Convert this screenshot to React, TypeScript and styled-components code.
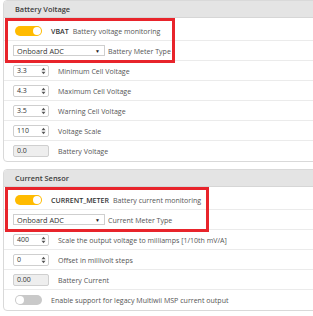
import React from "react";
import styled, { createGlobalStyle } from "styled-components";

const GlobalStyle = createGlobalStyle`
  body {
    margin: 0;
    background: #ffffff;
    font-family: "Open Sans", "Liberation Sans", sans-serif;
    color: #555555;
    overflow: hidden;
  }
`;

const Page = styled.div`
  width: 313px;
  height: 316px;
  overflow: hidden;
  padding-left: 3px;
  box-sizing: border-box;
`;

const Panel = styled.div`
  position: relative;
  width: 340px;
  margin-bottom: 7px;
  border: 1px solid #d9d9d9;
  border-radius: 4px;
  background: #ffffff;
  overflow: hidden;
`;

const Header = styled.div`
  height: 16px;
  display: flex;
  align-items: center;
  padding-left: 11px;
  background: #e4e4e4;
  border-bottom: 1px solid #d6d6d6;
  font-size: 7.4px;
  font-weight: 600;
  color: #3c3c3c;
`;

const Body = styled.div`
  padding-top: 3px;
`;

const Row = styled.div<{ last?: boolean }>`
  height: 19px;
  display: flex;
  align-items: center;
  gap: 6px;
  padding-left: 9px;
  border-bottom: 1px solid ${(p) => (p.last ? "transparent" : "#ebebeb")};
  font-size: 7.05px;
  white-space: nowrap;
`;

const Toggle = styled.span<{ on?: boolean }>`
  position: relative;
  width: 27px;
  height: 10px;
  margin: 0 3px 0 2px;
  border-radius: 6px;
  background: ${(p) => (p.on ? "#ffbb00" : "#c9c9c9")};
  flex-shrink: 0;
  &::after {
    content: "";
    position: absolute;
    top: 1px;
    ${(p) => (p.on ? "right: 1px;" : "left: 1px;")}
    width: 8px;
    height: 8px;
    border-radius: 50%;
    background: #ffffff;
  }
`;

const Strong = styled.span`
  font-weight: 600;
  color: #333333;
  margin-right: -2px;
`;

const Select = styled.div<{ w: number }>`
  width: ${(p) => p.w}px;
  height: 11px;
  box-sizing: border-box;
  display: flex;
  align-items: center;
  justify-content: space-between;
  padding: 0 4px 0 3px;
  border: 1px solid #cfcfcf;
  background: #ffffff;
  color: #333333;
  font-size: 7.3px;
  margin-right: -3px;
`;

const Arrow = styled.span`
  font-size: 5px;
  color: #222222;
`;

const NumBox = styled.div<{ disabled?: boolean }>`
  width: 36px;
  height: 12px;
  box-sizing: border-box;
  display: flex;
  align-items: center;
  justify-content: space-between;
  padding: 0 2px 0 3px;
  border: 1px solid #cfcfcf;
  border-radius: 2px;
  background: ${(p) => (p.disabled ? "#eeeeee" : "#ffffff")};
  color: #333333;
  font-size: 7px;
  flex-shrink: 0;
  margin-right: 3px;
`;

const Spin = styled.svg`
  width: 5px;
  height: 8px;
`;

const Mark = styled.div<{ top: number; w: number }>`
  position: absolute;
  left: 1px;
  top: ${(p) => p.top}px;
  width: ${(p) => p.w}px;
  height: 45px;
  box-sizing: border-box;
  border: 3px solid #e8242b;
  pointer-events: none;
`;

const Spinner = () => (
  <Spin viewBox="0 0 5 8">
    <path d="M0.5 3.2 L2.5 0.8 L4.5 3.2 Z" fill="#555" />
    <path d="M0.5 4.8 L2.5 7.2 L4.5 4.8 Z" fill="#555" />
  </Spin>
);

const NumRow = ({
  value,
  label,
  disabled,
  last,
}: {
  value: string;
  label: string;
  disabled?: boolean;
  last?: boolean;
}) => (
  <Row last={last}>
    <NumBox disabled={disabled}>
      <span>{value}</span>
      {!disabled && <Spinner />}
    </NumBox>
    <span>{label}</span>
  </Row>
);

const App = () => {
  return (
    <>
      <GlobalStyle />
      <Page>
        <Panel>
          <Header>Battery Voltage</Header>
          <Body>
            <Row>
              <Toggle on />
              <Strong>VBAT</Strong>
              <span>Battery voltage monitoring</span>
            </Row>
            <Row>
              <Select w={92}>
                <span>Onboard ADC</span>
                <Arrow>▼</Arrow>
              </Select>
              <span>Battery Meter Type</span>
            </Row>
            <NumRow value="3.3" label="Minimum Cell Voltage" />
            <NumRow value="4.3" label="Maximum Cell Voltage" />
            <NumRow value="3.5" label="Warning Cell Voltage" />
            <NumRow value="110" label="Voltage Scale" />
            <NumRow value="0.0" label="Battery Voltage" disabled last />
          </Body>
          <Mark top={17} w={170} />
        </Panel>
        <Panel>
          <Header>Current Sensor</Header>
          <Body>
            <Row>
              <Toggle on />
              <Strong>CURRENT_METER</Strong>
              <span>Battery current monitoring</span>
            </Row>
            <Row>
              <Select w={92}>
                <span>Onboard ADC</span>
                <Arrow>▼</Arrow>
              </Select>
              <span>Current Meter Type</span>
            </Row>
            <NumRow value="400" label="Scale the output voltage to milliamps [1/10th mV/A]" />
            <NumRow value="0" label="Offset in millivolt steps" />
            <NumRow value="0.00" label="Battery Current" disabled />
            <Row last>
              <Toggle />
              <span>Enable support for legacy Multiwii MSP current output</span>
            </Row>
          </Body>
          <Mark top={17} w={204} />
        </Panel>
      </Page>
    </>
  );
};

export default App;
